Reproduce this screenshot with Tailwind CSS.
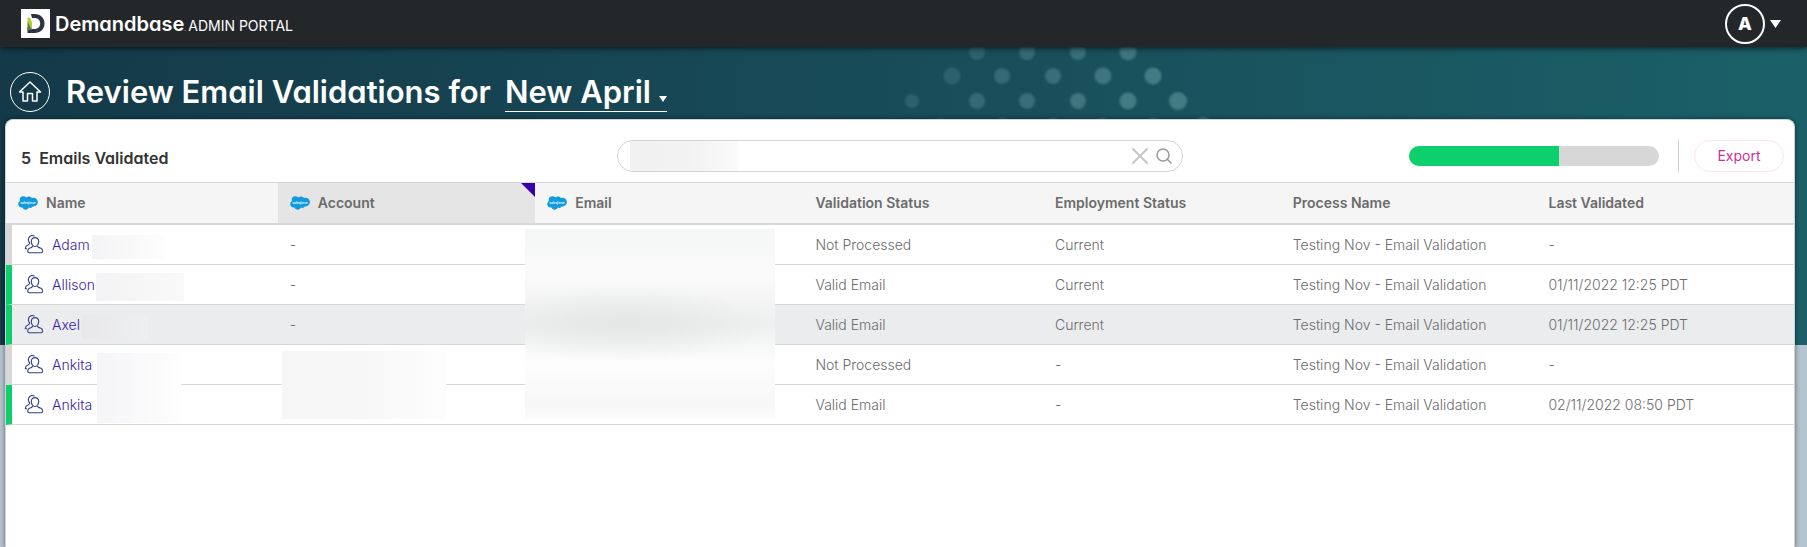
<!DOCTYPE html>
<html lang="en">
<head>
    <meta charset="UTF-8">
    <meta name="viewport" content="width=device-width, initial-scale=1.0">
    <title>Demandbase Admin Portal - Review Email Validations</title>
    <script src="https://cdn.jsdelivr.net/npm/@tailwindcss/browser@4"></script>
</head>
<body class="flex flex-col min-h-screen bg-[#b4c5cf] font-['Inter',sans-serif] text-sm text-[#6b6b6b]">

    <!-- Shared icons -->
    <svg class="hidden" aria-hidden="true">
        <symbol id="icon-salesforce" viewBox="0 0 20 14">
            <path fill="#109cdb" d="M8.300 1.600C9 .8 9.900.4 10.900.4c1.300 0 2.400.7 3 1.700.5-.2 1.100-.4 1.700-.4 2.400 0 4.300 2 4.300 4.400s-1.900 4.400-4.300 4.400c-.3 0-.6 0-.9-.1-.5.900-1.500 1.500-2.600 1.500-.5 0-.9-.1-1.300-.3-.5 1.200-1.700 2.100-3.100 2.100-1.500 0-2.700-.9-3.200-2.200-.2 0-.4.1-.7.100C1.800 11.600.2 10 .2 8c0-1.300.7-2.500 1.800-3.100-.2-.5-.3-1-.3-1.600C1.700 1.600 3.200.2 5 .2c1.400 0 2.600.5 3.300 1.400z"/>
            <text x="10" y="8" fill="#fff" font-size="3" font-style="italic" font-family="Inter, sans-serif" text-anchor="middle">salesforce</text>
        </symbol>
        <symbol id="icon-people" viewBox="0 0 20 20">
            <g fill="none" stroke="#33407f" stroke-width="1.100" stroke-linecap="round" stroke-linejoin="round">
                <path d="M11 2.600c2.300 0 3.700 1.600 3.700 4s-1.500 4.900-3.700 4.900-3.700-2.500-3.700-4.900 1.400-4 3.700-4z"/>
                <path d="M8.500 11.500c-.5 1-1.600 1.200-2.700 1.600-1.400.5-2.100 1.600-2.100 3.200 0 1 .5 1.500 1.500 1.500h11.900c1 0 1.500-.5 1.500-1.500 0-1.600-.7-2.700-2.100-3.200-1.100-.4-2.400-.6-2.900-1.600"/>
                <path d="M10.200.9C7.200-.2 4.300 1.500 4.400 4.600c0 1.500.5 2.800 1.400 3.700-.1 1-1 1.400-2.300 1.900-1.500.6-2.200 1.600-2.200 3.500h1.300"/>
            </g>
        </symbol>
    </svg>

    <!-- Top bar -->
    <header class="relative z-10 flex items-center justify-between h-[47px] pl-[21px] pr-[26px] bg-[#24272a] text-white shadow-[0_1px_6px_rgba(0,0,0,0.7)]">
        <a href="#" class="flex items-center gap-[5px]">
            <svg class="w-[29px] h-[29px]" viewBox="0 0 29 29" aria-hidden="true">
                <rect width="29" height="29" fill="#fff"/>
                <path fill="#2d3340" d="M10 5h3.500c6 0 10 3.900 10 9.500s-4 9.500-10 9.500H6.500v-6l4 2h3c3.300 0 5.700-2.200 5.700-5.500S16.800 9 13.500 9H11z"/>
                <path fill="#b5cc2e" d="M6.500 8.500l2.500.5 2 4v7.500l-4.500-8z"/>
                <path fill="#5f7d3a" d="M6.500 12.500l4.500 8-4.500 1z"/>
            </svg>
            <span class="flex items-baseline">
                <span class="text-xl font-semibold [font-feature-settings:'cv11']">Demandbase</span>
                <span class="w-1 text-[6px]">.</span>
                <span class="text-sm">ADMIN PORTAL</span>
            </span>
        </a>
        <button type="button" aria-label="Account menu" class="flex items-center gap-[5px]">
            <span class="flex items-center justify-center size-10 border-2 border-white rounded-full text-lg font-extrabold">A</span>
            <svg class="w-[11px] h-2" viewBox="0 0 11 8" aria-hidden="true"><path fill="#fff" d="M0 0h11L5.500 8z"/></svg>
        </button>
    </header>

    <main class="relative flex flex-col grow pl-[5px] pr-3">

        <!-- Backdrop behind the page title and the top of the card -->
        <div class="absolute inset-x-0 top-0 h-[298px] overflow-hidden bg-linear-to-r from-[#143948] via-[#184c59] to-[#1b6068]">
            <svg class="absolute top-0 left-1/2 w-[340px] h-20 blur-[1px]" viewBox="903 47 340 80" fill="#8ec4c8" aria-hidden="true">
                <g opacity="0.180"><circle cx="911" cy="101" r="7"/><circle cx="951" cy="76" r="8.500"/><circle cx="976" cy="52" r="8"/><circle cx="940" cy="126" r="8"/></g>
                <g opacity="0.240"><circle cx="976" cy="101" r="8"/><circle cx="1001" cy="76" r="8"/><circle cx="1026" cy="52" r="8"/><circle cx="1001" cy="126" r="8"/></g>
                <g opacity="0.270"><circle cx="1026" cy="101" r="8"/><circle cx="1052" cy="76" r="8"/><circle cx="1077" cy="52" r="8"/><circle cx="1052" cy="126" r="8"/></g>
                <g opacity="0.320"><circle cx="1077" cy="101" r="8"/><circle cx="1102" cy="76" r="8.500"/><circle cx="1127" cy="52" r="8.500"/><circle cx="1102" cy="126" r="8"/></g>
                <g opacity="0.370"><circle cx="1127" cy="101" r="8.500"/><circle cx="1152" cy="76" r="8.500"/><circle cx="1177" cy="101" r="9"/><circle cx="1152" cy="126" r="8"/><circle cx="1202" cy="126" r="9"/></g>
            </svg>
        </div>

        <!-- Page title -->
        <div class="relative flex items-center gap-4 pt-[25px] pb-[7px] pl-[5px] text-white">
            <a href="#" aria-label="Home" class="flex items-center justify-center size-10 border border-white rounded-full">
                <svg class="w-6 h-6" viewBox="0 0 24 24" fill="none" stroke="currentColor" stroke-width="1.500" stroke-linejoin="round" aria-hidden="true">
                    <path d="M1.500 12L12 2l10.500 10h-3.500v9h-4.500v-7.500h-5V21H5v-9z"/>
                </svg>
            </a>
            <h1 class="flex items-center gap-3.5 text-[31px] leading-10 font-semibold [font-feature-settings:'cv11']">
                <label for="listSelect">Review Email Validations for</label>
                <span class="relative">
                    <select id="listSelect" class="block appearance-none h-10 pr-4 border-b border-white outline-none">
                        <option>New April</option>
                    </select>
                    <svg class="absolute right-0 bottom-2.5 w-2 h-1.5 pointer-events-none" viewBox="0 0 8 6" aria-hidden="true"><path fill="#fff" d="M0 0h8L4 6z"/></svg>
                </span>
            </h1>
        </div>

        <!-- Card -->
        <section class="relative grow border border-b-0 border-[#cfd3d6] rounded-t-lg bg-white shadow-[0_0_5px_rgba(0,0,0,0.5)]">

            <!-- Toolbar -->
            <div class="grid grid-cols-[1fr_minmax(0,566px)_1fr] items-center pt-5 pb-2.5 px-2.5">
                <h2 class="pl-[5px] pt-1 text-base font-semibold text-[#333] [font-feature-settings:'cv11']">5&nbsp; Emails Validated</h2>
                <form class="flex items-center gap-2 h-8 pl-3 pr-2.5 border border-[#d4d4d4] rounded-full">
                    <span class="w-[108px] h-[30px] bg-linear-to-r from-[#f1f1f1] via-[#f2f2f2] to-[#fafafa]"></span>
                    <input type="text" aria-label="Search" class="grow min-w-0 outline-none">
                    <button type="reset" aria-label="Clear">
                        <svg class="size-4" viewBox="0 0 16 16" fill="none" stroke="#c6c6c6" stroke-width="2" stroke-linecap="round" aria-hidden="true"><path d="M1 1l14 14M15 1L1 15"/></svg>
                    </button>
                    <button type="submit" aria-label="Search">
                        <svg class="size-4" viewBox="0 0 16 16" fill="none" stroke="#999" stroke-width="1.500" stroke-linecap="round" aria-hidden="true"><circle cx="7" cy="7" r="6"/><path d="M11.300 11.300L15 15"/></svg>
                    </button>
                </form>
                <div class="flex items-center justify-end">
                    <div role="progressbar" aria-label="Emails validated" aria-valuenow="60" aria-valuemin="0" aria-valuemax="100" class="w-[250px] h-5 mr-[19px] rounded-full overflow-hidden bg-[#d7d7d7]">
                        <div class="h-full bg-[#0dd06c]" style="width: 60%"></div>
                    </div>
                    <div class="w-px h-8 mr-[15px] bg-[#d0d0d0]"></div>
                    <button type="button" class="w-[90px] h-8 border border-[#fce4f0] rounded-full text-[#cc2f96]">Export</button>
                </div>
            </div>

            <!-- Validations table -->
            <table class="w-full table-fixed border-separate border-spacing-0 text-left">
                <colgroup>
                    <col class="w-[15.2%]">
                    <col class="w-[14.4%]">
                    <col class="w-[15%]">
                    <col class="w-[13.4%]">
                    <col class="w-[13.3%]">
                    <col class="w-[14.3%]">
                    <col>
                </colgroup>
                <thead class="bg-[#f5f5f5]">
                    <tr class="h-[43px] [&>th]:border-t [&>th]:border-b-2 [&>th]:border-[#d7d7d7] [&>th]:px-3 [&>th]:font-semibold">
                        <th><span class="flex items-center gap-2"><svg class="w-5 h-3.5"><use href="#icon-salesforce"/></svg>Name</span></th>
                        <th class="relative bg-[#e5e5e5]">
                            <span class="flex items-center gap-2"><svg class="w-5 h-3.5"><use href="#icon-salesforce"/></svg>Account</span>
                            <svg class="absolute top-0 right-0 size-3.5" viewBox="0 0 14 14" aria-hidden="true"><path fill="#3a00ad" d="M0 0h14v14z"/></svg>
                        </th>
                        <th><span class="flex items-center gap-2"><svg class="w-5 h-3.5"><use href="#icon-salesforce"/></svg>Email</span></th>
                        <th>Validation Status</th>
                        <th>Employment Status</th>
                        <th>Process Name</th>
                        <th>Last Validated</th>
                    </tr>
                </thead>
                <tbody class="font-light [&>tr]:h-10 [&>tr>td]:px-3 [&>tr>td]:border-b [&>tr>td]:border-b-[#d7d7d7]">
                    <tr>
                        <td class="relative border-l-6 border-l-[#d7d7d7]">
                            <a href="#" class="flex items-center gap-2 text-[#3a1ba5]"><svg class="size-5"><use href="#icon-people"/></svg>Adam</a>
                            <span class="absolute left-20 top-2.5 w-18 h-6 bg-linear-to-r from-[#f4f4f6] to-[#fdfdfd]"></span>
                        </td>
                        <td>-</td>
                        <!-- One mask covers the addresses of all five rows -->
                        <td class="relative">
                            <span class="absolute z-10 -left-2.5 top-1 w-[250px] h-[190px] bg-[radial-gradient(60%_20%_at_40%_50%,#e4e6e6,transparent),linear-gradient(180deg,#f5f6f6,#fafafa_25%,#eeefef_50%,#fdfdfd_70%,#f7f7f7_92%,#fcfcfc)]"></span>
                        </td>
                        <td>Not Processed</td>
                        <td>Current</td>
                        <td>Testing Nov - Email Validation</td>
                        <td>-</td>
                    </tr>
                    <tr>
                        <td class="relative border-l-6 border-l-[#0dd06c]">
                            <a href="#" class="flex items-center gap-2 text-[#3a1ba5]"><svg class="size-5"><use href="#icon-people"/></svg>Allison</a>
                            <span class="absolute left-[84px] top-2 w-[88px] h-7 bg-linear-to-r from-[#f3f3f5] to-[#f9f9f9]"></span>
                        </td>
                        <td>-</td>
                        <td></td>
                        <td>Valid Email</td>
                        <td>Current</td>
                        <td>Testing Nov - Email Validation</td>
                        <td>01/11/2022 12:25 PDT</td>
                    </tr>
                    <tr class="bg-[#ebecee]">
                        <td class="relative border-l-6 border-l-[#0dd06c]">
                            <a href="#" class="flex items-center gap-2 text-[#3a1ba5]"><svg class="size-5"><use href="#icon-people"/></svg>Axel</a>
                            <span class="absolute left-[70px] top-2.5 w-[66px] h-6 bg-linear-to-r from-[#e8e8ea] to-[#eeeff1]"></span>
                        </td>
                        <td>-</td>
                        <td></td>
                        <td>Valid Email</td>
                        <td>Current</td>
                        <td>Testing Nov - Email Validation</td>
                        <td>01/11/2022 12:25 PDT</td>
                    </tr>
                    <tr>
                        <td class="relative border-l-6 border-l-[#d7d7d7]">
                            <a href="#" class="flex items-center gap-2 text-[#3a1ba5]"><svg class="size-5"><use href="#icon-people"/></svg>Ankita</a>
                            <span class="absolute z-10 left-[85px] top-2 w-[84px] h-[70px] bg-linear-to-r from-[#f5f5f8] to-[#fdfdfd]"></span>
                        </td>
                        <td class="relative">
                            <span class="absolute z-10 left-1 top-1.5 w-[164px] h-17 bg-linear-to-r from-[#f6f6f6] via-[#f7f7f7] to-[#fdfdfd]"></span>
                        </td>
                        <td></td>
                        <td>Not Processed</td>
                        <td>-</td>
                        <td>Testing Nov - Email Validation</td>
                        <td>-</td>
                    </tr>
                    <tr>
                        <td class="border-l-6 border-l-[#0dd06c]">
                            <a href="#" class="flex items-center gap-2 text-[#3a1ba5]"><svg class="size-5"><use href="#icon-people"/></svg>Ankita</a>
                        </td>
                        <td></td>
                        <td></td>
                        <td>Valid Email</td>
                        <td>-</td>
                        <td>Testing Nov - Email Validation</td>
                        <td>02/11/2022 08:50 PDT</td>
                    </tr>
                </tbody>
            </table>
        </section>
    </main>

</body>
</html>
